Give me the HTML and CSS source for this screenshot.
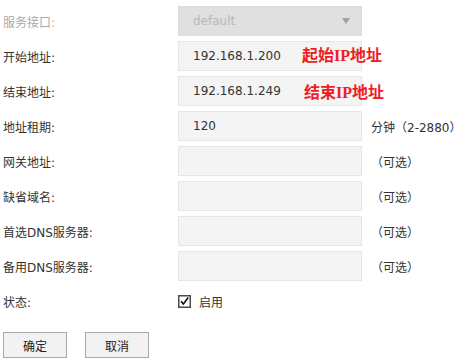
FILE: index.html
```html
<!DOCTYPE html>
<html>
<head>
<meta charset="utf-8">
<link rel="stylesheet" href="styles.css">
</head>
<body>
<div class="form">
  <div class="row">
    <div class="label disabled">服务接口:</div>
    <div class="select"><span>default</span><span class="arrow"></span></div>
  </div>
  <div class="row">
    <div class="label">开始地址:</div>
    <div class="input">192.168.1.200</div>
    <div class="note note1">起始IP地址</div>
  </div>
  <div class="row">
    <div class="label">结束地址:</div>
    <div class="input">192.168.1.249</div>
    <div class="note note2">结束IP地址</div>
  </div>
  <div class="row">
    <div class="label">地址租期:</div>
    <div class="input">120</div>
    <div class="suffix">分钟（2-2880）</div>
  </div>
  <div class="row">
    <div class="label">网关地址:</div>
    <div class="input"></div>
    <div class="suffix">（可选）</div>
  </div>
  <div class="row">
    <div class="label">缺省域名:</div>
    <div class="input"></div>
    <div class="suffix">（可选）</div>
  </div>
  <div class="row">
    <div class="label">首选DNS服务器:</div>
    <div class="input"></div>
    <div class="suffix">（可选）</div>
  </div>
  <div class="row">
    <div class="label">备用DNS服务器:</div>
    <div class="input"></div>
    <div class="suffix">（可选）</div>
  </div>
  <div class="row status">
    <div class="label">状态:</div>
    <div class="check">
      <svg width="13" height="13" viewBox="0 0 13 13"><rect x="0.75" y="0.75" width="11.5" height="11.5" fill="#fff" stroke="#4a4a4a" stroke-width="1.5"/><path d="M3 6.2 L5.4 9 L10.2 2.6" fill="none" stroke="#111" stroke-width="1.6"/></svg>
      <span>启用</span>
    </div>
  </div>
  <div class="buttons">
    <div class="btn">确定</div>
    <div class="btn">取消</div>
  </div>
</div>
</body>
</html>
```
FILE: styles.css
```css
html, body {
  margin: 0;
  padding: 0;
  background: #fff;
}
body {
  font-family: "DejaVu Sans", "Noto Sans CJK SC", sans-serif;
  font-size: 12px;
  color: #333;
}
.form {
  padding: 6px 0 0 3px;
}
.row {
  position: relative;
  display: flex;
  align-items: center;
  height: 30px;
  margin-bottom: 5px;
}
.label {
  width: 175px;
  flex: none;
  color: #333;
}
.label.disabled {
  color: #aaa;
}
.select, .input {
  box-sizing: border-box;
  width: 184px;
  height: 30px;
  flex: none;
  display: flex;
  align-items: center;
  padding-left: 14px;
  border: 1px solid #e6e6e6;
  background: #f4f4f4;
  color: #333;
}
.select {
  background: #e0e0e0;
  border-color: #dcdcdc;
  color: #b8b8b8;
  justify-content: space-between;
  padding-right: 11px;
}
.arrow {
  width: 0;
  height: 0;
  border-left: 4px solid transparent;
  border-right: 4px solid transparent;
  border-top: 6px solid #a0a0a0;
}
.suffix {
  margin-left: 9px;
  color: #333;
}
.note {
  position: absolute;
  top: 6px;
  color: #ee1c25;
  font-family: "Liberation Serif", "Noto Sans CJK SC", serif;
  font-weight: bold;
  font-size: 16px;
  line-height: 18px;
}
.note1 {
  left: 299px;
}
.note2 {
  left: 301px;
  top: 8px;
}
.check {
  display: flex;
  align-items: center;
  gap: 8px;
}
.check svg {
  display: block;
}
.buttons {
  display: flex;
  gap: 18px;
  margin-top: 16px;
}
.btn {
  box-sizing: border-box;
  width: 64px;
  height: 26px;
  border: 1px solid #aaa;
  background: #f2f2f2;
  display: flex;
  align-items: center;
  justify-content: center;
  color: #222;
}
```
